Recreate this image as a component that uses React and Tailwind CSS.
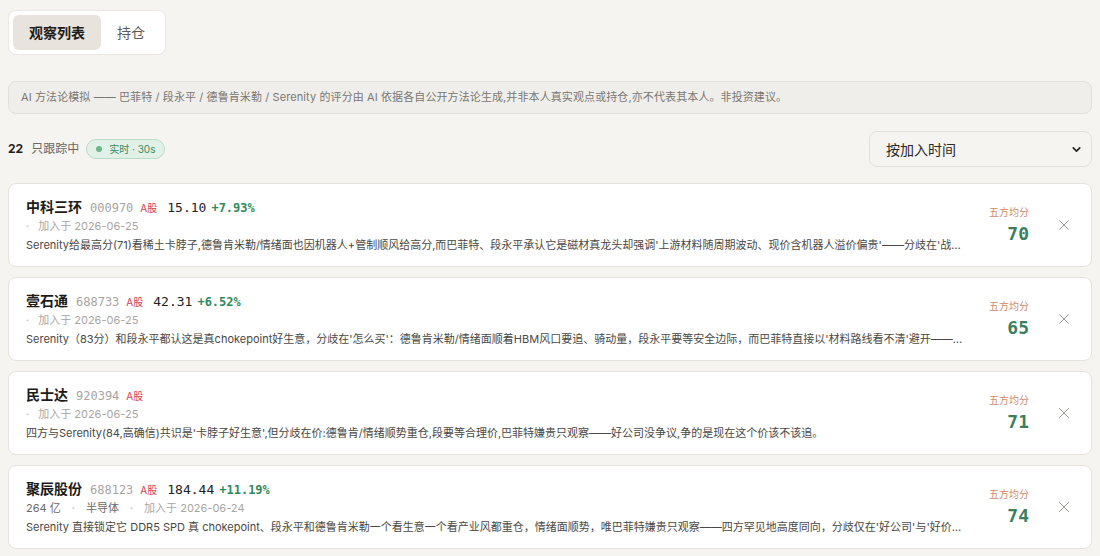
import { useState } from 'react';
import { X, ChevronDown } from 'lucide-react';

const cjk = '"Inter", "Noto Sans CJK SC", sans-serif';
const mono = '"DejaVu Sans Mono", "Noto Sans CJK SC", monospace';

const stocks = [
  {
    name: '中科三环',
    code: '000970',
    price: '15.10',
    change: '+7.93%',
    meta: [],
    added: '2026-06-25',
    score: 70,
    note: "Serenity给最高分(71)看稀土卡脖子,德鲁肯米勒/情绪面也因机器人+管制顺风给高分,而巴菲特、段永平承认它是磁材真龙头却强调'上游材料随周期波动、现价含机器人溢价偏贵'——分歧在'战略卡位值不值这个价'",
  },
  {
    name: '壹石通',
    code: '688733',
    price: '42.31',
    change: '+6.52%',
    meta: [],
    added: '2026-06-25',
    score: 65,
    note: "Serenity（83分）和段永平都认这是真chokepoint好生意，分歧在'怎么买'：德鲁肯米勒/情绪面顺着HBM风口要追、骑动量，段永平要等安全边际，而巴菲特直接以'材料路线看不清'避开——本质是确定性之争",
  },
  {
    name: '民士达',
    code: '920394',
    price: null,
    change: null,
    meta: [],
    added: '2026-06-25',
    score: 71,
    note: "四方与Serenity(84,高确信)共识是'卡脖子好生意',但分歧在价:德鲁肯/情绪顺势重仓,段要等合理价,巴菲特嫌贵只观察——好公司没争议,争的是现在这个价该不该追。",
  },
  {
    name: '聚辰股份',
    code: '688123',
    price: '184.44',
    change: '+11.19%',
    meta: ['264 亿', '半导体'],
    added: '2026-06-24',
    score: 74,
    note: "Serenity 直接锁定它 DDR5 SPD 真 chokepoint、段永平和德鲁肯米勒一个看生意一个看产业风都重仓，情绪面顺势，唯巴菲特嫌贵只观察——四方罕见地高度同向，分歧仅在'好公司'与'好价格'。",
  },
];

function StockCard({ s }) {
  return (
    <div className="flex items-center rounded-lg border border-[#e6e3dd] bg-white pl-[17px] pr-[11px] pt-[12px] pb-[12px]">
      <div className="min-w-0 flex-1">
        <div className="flex h-[22px] items-baseline">
          <span className="text-[14px] font-bold text-[#1c1b19]">{s.name}</span>
          <span className="ml-2 text-[12px] text-[#a8a5a0]" style={{ fontFamily: mono }}>{s.code}</span>
          <span className="ml-[7px] text-[10px] text-[#d2404f]">A股</span>
          {s.price && (
            <span className="ml-[10px] text-[13px] text-[#22211f]" style={{ fontFamily: mono }}>{s.price}</span>
          )}
          {s.change && (
            <span className="ml-[5px] text-[12px] font-bold text-[#2f8a5b]" style={{ fontFamily: mono }}>{s.change}</span>
          )}
        </div>
        <div className="flex items-center text-[11px] leading-[17px]">
          {s.meta.map((m) => (
            <span key={m} className="flex items-center text-[#6b6863]">
              {m}
              <span className="mx-[11px] text-[#b5b2ad]">·</span>
            </span>
          ))}
          {s.meta.length === 0 && <span className="mr-[9px] text-[#b5b2ad]">·</span>}
          <span className="text-[#a9a6a1]">加入于 {s.added}</span>
        </div>
        <p className="mt-[1px] truncate text-[11px] leading-[18px] text-[#4a4844]">{s.note}</p>
      </div>
      <div className="ml-4 flex w-[46px] shrink-0 flex-col items-end">
        <span className="text-[10px] leading-[13px] text-[#cf8a6b]">五方均分</span>
        <span className="mt-[4px] text-[18px] font-bold leading-[22px] text-[#3b7f5c]" style={{ fontFamily: mono }}>
          {s.score}
        </span>
      </div>
      <button className="ml-[19px] flex h-8 w-8 items-center justify-center text-[#9c9994]">
        <X className="h-[18px] w-[18px]" strokeWidth={1.3} />
      </button>
    </div>
  );
}

export default function App() {
  const [tab, setTab] = useState('watch');

  return (
    <div className="min-h-screen bg-[#f5f4f1] px-2 pt-[10px] pb-4" style={{ fontFamily: cjk }}>
      {/* tabs */}
      <div className="inline-flex rounded-lg border border-[#ebe8e3] bg-white p-1">
        <button
          onClick={() => setTab('watch')}
          className={`h-[35px] rounded-md px-4 text-[14px] ${tab === 'watch' ? 'bg-[#e8e4dd] font-bold text-[#1f1e1c]' : 'text-[#5c5a56]'}`}
        >
          观察列表
        </button>
        <button
          onClick={() => setTab('hold')}
          className={`h-[35px] rounded-md px-4 text-[14px] ${tab === 'hold' ? 'bg-[#e8e4dd] font-bold text-[#1f1e1c]' : 'text-[#5c5a56]'}`}
        >
          持仓
        </button>
      </div>

      {/* disclaimer */}
      <div className="mt-[26px] rounded-lg border border-[#e3e0da] bg-[#f0eeea] px-3 py-[7px] text-[11px] leading-[17px] tracking-[0.1px] text-[#7a7772]">
        AI 方法论模拟 —— 巴菲特 / 段永平 / 德鲁肯米勒 / Serenity 的评分由 AI 依据各自公开方法论生成,并非本人真实观点或持仓,亦不代表其本人。非投资建议。
      </div>

      {/* toolbar */}
      <div className="mt-[17px] flex items-center justify-between">
        <div className="flex items-center">
          <span className="text-[12px] font-bold text-[#1f1e1c]">22</span>
          <span className="ml-2 text-[12px] text-[#6b6863]">只跟踪中</span>
          <span className="ml-[7px] flex h-[20px] items-center rounded-full border border-[#b9dcc6] bg-[#e2f1e7] px-[9px] text-[10px] text-[#3c8a5f]">
            <span className="mr-[7px] h-[6px] w-[6px] rounded-full bg-[#6bb58a]" />
            实时 · 30s
          </span>
        </div>
        <div className="flex h-[36px] w-[223px] items-center justify-between rounded-lg border border-[#e3e0da] bg-[#f5f4f1] pl-4 pr-[8px] text-[14px] text-[#2a2927]">
          按加入时间
          <ChevronDown className="h-[13px] w-[13px] text-[#222]" strokeWidth={3} />
        </div>
      </div>

      {/* list */}
      <div className="mt-[16px] flex flex-col gap-[10px]">
        {stocks.map((s) => (
          <StockCard key={s.code} s={s} />
        ))}
      </div>
    </div>
  );
}
